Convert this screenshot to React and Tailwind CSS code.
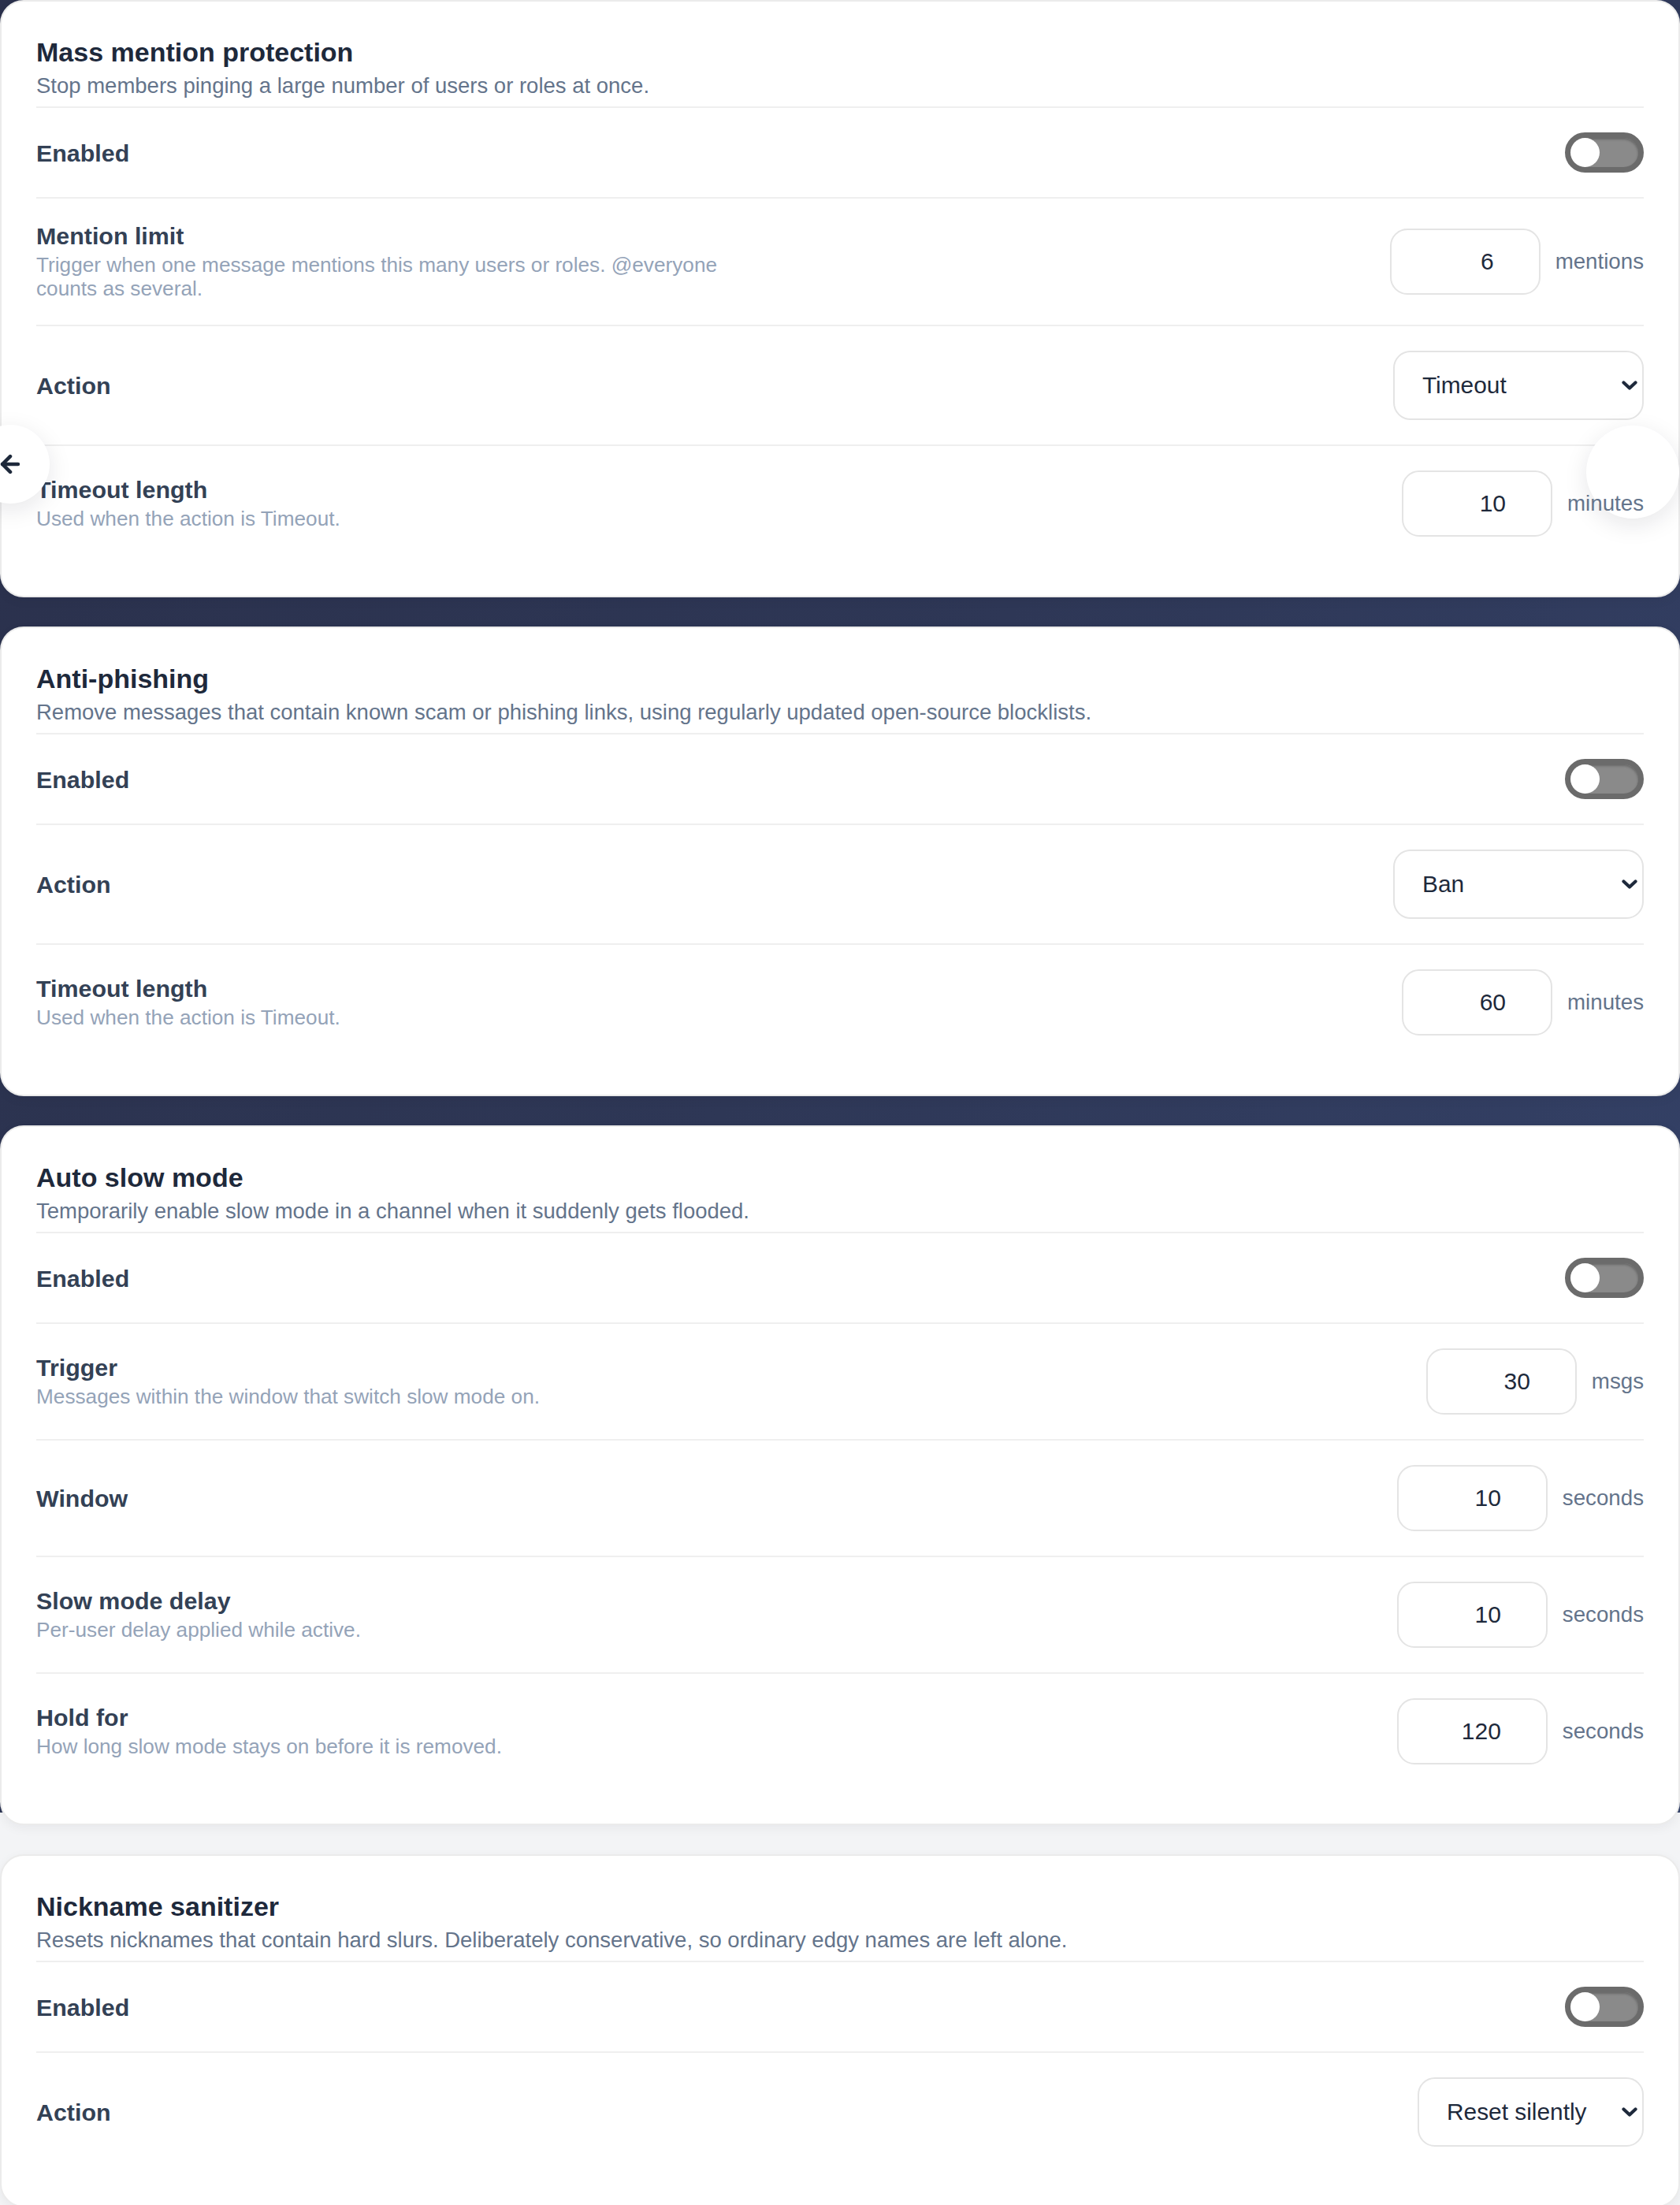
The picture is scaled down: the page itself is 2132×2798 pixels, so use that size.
import { ArrowLeft } from "lucide-react";

const SECTIONS = [
  {
    title: "Mass mention protection",
    subtitle: "Stop members pinging a large number of users or roles at once.",
    rows: [
      { kind: "toggle", label: "Enabled" },
      {
        kind: "number",
        label: "Mention limit",
        hint: "Trigger when one message mentions this many users or roles. @everyone counts as several.",
        value: "6",
        unit: "mentions",
      },
      { kind: "select", label: "Action", value: "Timeout", options: ["Delete only", "Warn", "Timeout", "Kick", "Ban"], width: "w-[318px]" },
      { kind: "number", label: "Timeout length", hint: "Used when the action is Timeout.", value: "10", unit: "minutes" },
    ],
  },
  {
    title: "Anti-phishing",
    subtitle: "Remove messages that contain known scam or phishing links, using regularly updated open-source blocklists.",
    rows: [
      { kind: "toggle", label: "Enabled" },
      { kind: "select", label: "Action", value: "Ban", options: ["Delete only", "Warn", "Timeout", "Kick", "Ban"], width: "w-[318px]" },
      { kind: "number", label: "Timeout length", hint: "Used when the action is Timeout.", value: "60", unit: "minutes" },
    ],
  },
  {
    title: "Auto slow mode",
    subtitle: "Temporarily enable slow mode in a channel when it suddenly gets flooded.",
    rows: [
      { kind: "toggle", label: "Enabled" },
      { kind: "number", label: "Trigger", hint: "Messages within the window that switch slow mode on.", value: "30", unit: "msgs" },
      { kind: "number", label: "Window", value: "10", unit: "seconds" },
      { kind: "number", label: "Slow mode delay", hint: "Per-user delay applied while active.", value: "10", unit: "seconds" },
      { kind: "number", label: "Hold for", hint: "How long slow mode stays on before it is removed.", value: "120", unit: "seconds" },
    ],
  },
  {
    title: "Nickname sanitizer",
    subtitle: "Resets nicknames that contain hard slurs. Deliberately conservative, so ordinary edgy names are left alone.",
    rows: [
      { kind: "toggle", label: "Enabled" },
      { kind: "select", label: "Action", value: "Reset silently", options: ["Reset silently", "Reset and warn"], width: "w-[287px]" },
    ],
  },
];

function Toggle() {
  return (
    <button
      type="button"
      className="flex h-[51px] w-[100px] items-center rounded-full border-[7px] border-[#6b6b6b] bg-[#8a8a8a] shadow-[inset_0_2px_3px_rgba(0,0,0,0.25)]"
    >
      <span className="block h-[37px] w-[37px] rounded-full bg-white" />
    </button>
  );
}

function NumberField({ value, unit }) {
  return (
    <div className="flex items-center gap-[19px]">
      <input
        type="text"
        defaultValue={value}
        className="h-[84px] w-[191px] rounded-[22px] border-2 border-[#e4e4e4] bg-white pr-[57px] text-right text-[30px] text-[#1e293b] outline-none"
      />
      {/* unit label sits above the floating nav button */}
      <span className="relative z-10 text-[27.7px] text-[#64748b]">{unit}</span>
    </div>
  );
}

function SelectField({ value, options, width }) {
  return (
    <div className={`relative ${width}`}>
      <select
        defaultValue={value}
        className="h-[88px] w-full appearance-none rounded-[22px] border-2 border-[#e4e4e4] bg-white pl-[35px] pr-[50px] text-[29.85px] text-[#1e293b] outline-none"
      >
        {options.map((o) => (
          <option key={o}>{o}</option>
        ))}
      </select>
      <svg
        className="pointer-events-none absolute right-[8px] top-[38px]"
        width="20"
        height="13"
        viewBox="0 0 20 13"
        fill="none"
      >
        <path d="M2.5 2.5 L10 9.5 L17.5 2.5" stroke="#1e293b" strokeWidth="4.2" strokeLinecap="round" strokeLinejoin="round" />
      </svg>
    </div>
  );
}

function Row({ row }) {
  return (
    <div className="flex items-center justify-between gap-[40px] border-t-2 border-[#efefef] py-[31px]">
      <div className="max-w-[910px]">
        <p className="text-[30.4px] font-bold leading-[32px] text-[#334155]">{row.label}</p>
        {row.hint && <p className="mt-[6px] text-[26.2px] leading-[30px] text-[#94a3b8]">{row.hint}</p>}
      </div>
      {row.kind === "toggle" && <Toggle />}
      {row.kind === "number" && <NumberField value={row.value} unit={row.unit} />}
      {row.kind === "select" && <SelectField value={row.value} options={row.options} width={row.width} />}
    </div>
  );
}

function Card({ section }) {
  return (
    <section className="rounded-[30px] border-2 border-[#ebebeb] bg-white px-[44px] pb-[44px] pt-[44px] shadow-[0_4px_14px_rgba(15,23,42,0.05)]">
      <div className="pb-[8px]">
        <h2 className="text-[34px] font-bold leading-[40px] text-[#1e293b]">{section.title}</h2>
        <p className="mt-[5px] text-[27.5px] leading-[36px] text-[#64748b]">{section.subtitle}</p>
      </div>
      {section.rows.map((row) => (
        <Row key={row.label} row={row} />
      ))}
    </section>
  );
}

export default function App() {
  return (
    <div className="relative min-h-screen w-full overflow-hidden bg-[#f3f4f6] bg-[linear-gradient(120deg,#2a304b_0%,#2e3756_50%,#35436a_100%)] bg-[length:100%_2300px] bg-no-repeat font-['Liberation_Sans',Arial,sans-serif]">
      <div className="flex flex-col gap-[37px]">
        {SECTIONS.map((s) => (
          <Card key={s.title} section={s} />
        ))}
      </div>

      {/* carousel arrows */}
      <button
        type="button"
        className="absolute left-[-37px] top-[539px] flex h-[100px] w-[100px] items-center justify-center rounded-full bg-white shadow-[0_8px_30px_rgba(15,23,42,0.10)]"
      >
        <ArrowLeft size={34} strokeWidth={3.2} color="#1e293b" />
      </button>
      <button
        type="button"
        className="absolute left-[2013px] top-[540px] h-[118px] w-[118px] rounded-full bg-white shadow-[0_8px_30px_rgba(15,23,42,0.10)]"
      />
    </div>
  );
}
